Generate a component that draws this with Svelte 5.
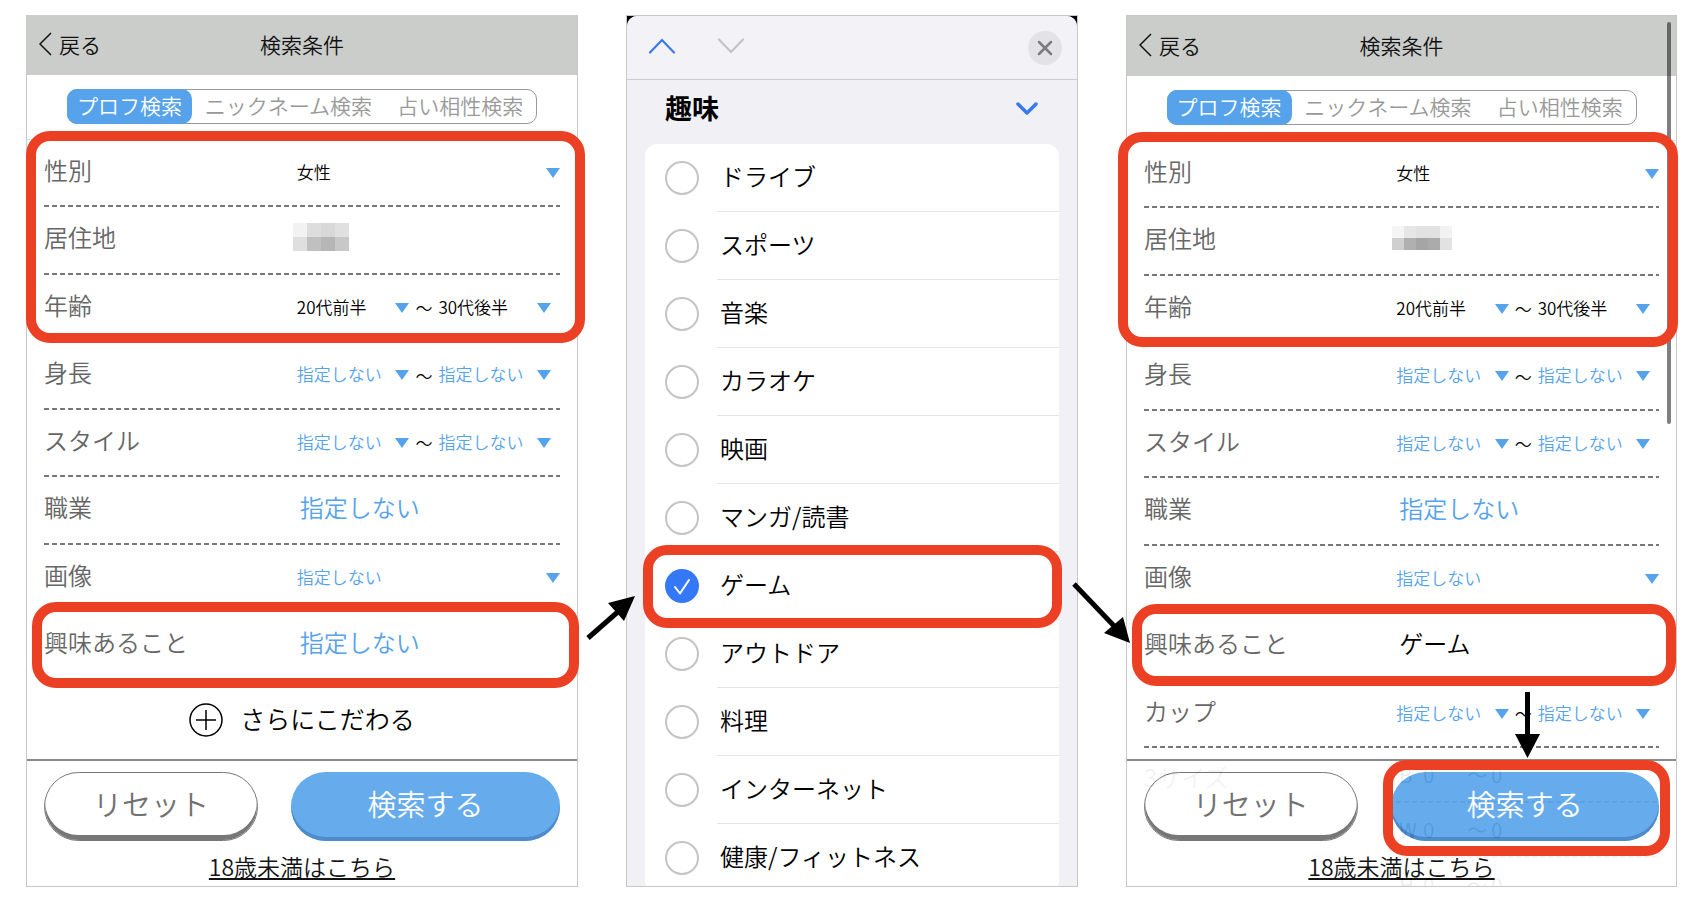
<script>
    const none = '指定しない';

    const baseRows = [
        {label: '性別', type: 'single', values: ['女性'], set: true},
        {label: '居住地', type: 'mosaic'},
        {label: '年齢', type: 'range', values: ['20代前半', '30代後半'], set: true},
        {label: '身長', type: 'range', values: [none, none]},
        {label: 'スタイル', type: 'range', values: [none, none]},
        {label: '職業', type: 'link', values: [none]},
        {label: '画像', type: 'single', values: [none]},
    ];

    const screens = [
        {
            id: 'before',
            rows: [...baseRows, {label: '興味あること', type: 'link', values: [none]}],
            mosaic: [
                ['#f2f2f2', '#dddddd', '#d8d8d8', '#e0e0e0'],
                ['#dfdfdf', '#c0c0c0', '#b6b6b6', '#c8c8c8'],
            ],
            more: true,
        },
        {
            id: 'after',
            rows: [
                ...baseRows,
                {label: '興味あること', type: 'link', values: ['ゲーム'], set: true},
                {label: 'カップ', type: 'range', values: [none, none]},
                {label: '3サイズ', type: 'sizes'},
            ],
            mosaic: [
                ['#f5f5f5', '#e6e6e6', '#e2e2e2', '#e2e2e2', '#f2f2f2'],
                ['#cfcfcf', '#b0b0b0', '#a5a5a5', '#ababab', '#e2e2e2'],
            ],
            more: false,
        },
    ];

    const hobbies = [
        'ドライブ', 'スポーツ', '音楽', 'カラオケ', '映画', 'マンガ/読書',
        'ゲーム', 'アウトドア', '料理', 'インターネット', '健康/フィットネス',
    ];
    let hobby = $state('ゲーム');
</script>

{#snippet dropdown(id, value, set)}
    <span class="dropdown">
        <select {id} aria-label={id} class:set>
            <option>{value}</option>
        </select>
        <svg width="14" height="10" viewBox="0 0 14 10"><path d="M0 0H14L7 10Z" fill="#56a3eb" /></svg>
    </span>
{/snippet}

{#snippet searchScreen(s)}
    <section class="phone search {s.id}">
        <header>
            <button class="back">
                <svg width="13" height="24" viewBox="0 0 13 24"><path d="M12 1L1 12L12 23" fill="none" stroke="#111" stroke-width="1.5" /></svg>
                戻る
            </button>
            <h1>検索条件</h1>
        </header>
        <nav>
            <div class="tabs">
                <button class="active">プロフ検索</button>
                <button>ニックネーム検索</button>
                <button>占い相性検索</button>
            </div>
        </nav>
        <div class="rows">
            {#each s.rows as row}
                <div class="row" class:tall={row.type === 'sizes'}>
                    <span class="label">{row.label}</span>
                    {#if row.type === 'single'}
                        {@render dropdown(`${s.id}-${row.label}`, row.values[0], row.set)}
                    {:else if row.type === 'range'}
                        <div class="range">
                            {@render dropdown(`${s.id}-${row.label}-from`, row.values[0], row.set)}
                            <span>〜</span>
                            {@render dropdown(`${s.id}-${row.label}-to`, row.values[1], row.set)}
                        </div>
                    {:else if row.type === 'link'}
                        <button class="pick" class:set={row.set}>{row.values[0]}</button>
                    {:else if row.type === 'mosaic'}
                        <div class="mosaic">
                            {#each s.mosaic as line}
                                <div>
                                    {#each line as color}<i style="background: {color}"></i>{/each}
                                </div>
                            {/each}
                        </div>
                    {:else}
                        <div class="sizes">
                            {#each ['B', 'W', 'H'] as part}
                                <div><span>{part}</span><span>0</span><span>〜</span><span>0</span></div>
                            {/each}
                        </div>
                    {/if}
                </div>
            {/each}
        </div>
        {#if s.more}
            <button class="more">
                <svg width="34" height="34" viewBox="0 0 34 34" fill="none" stroke="#000" stroke-width="1.5">
                    <circle cx="17" cy="17" r="16" />
                    <path d="M17 7V27M7 17H27" />
                </svg>
                <span>さらにこだわる</span>
            </button>
        {/if}
        <footer>
            <div class="actions">
                <button class="reset">リセット</button>
                <button class="submit">検索する</button>
            </div>
            <a href="#under18">18歳未満はこちら</a>
        </footer>
        {#if !s.more}
            <div class="scrollbar"></div>
        {/if}
    </section>
{/snippet}

<main>
    <div class="step">
        {@render searchScreen(screens[0])}
        <div class="mark basics"></div>
        <div class="mark interest"></div>
    </div>

    <div class="step">
        <section class="phone picker">
            <div class="sheet">
                <div class="toolbar">
                    <button aria-label="前へ">
                        <svg width="28" height="16" viewBox="0 0 28 16"><path d="M2 14.5L14 2L26 14.5" fill="none" stroke="#3a78ee" stroke-width="2.2" stroke-linecap="round" /></svg>
                    </button>
                    <button aria-label="次へ">
                        <svg width="28" height="16" viewBox="0 0 28 16"><path d="M2 1.5L14 14L26 1.5" fill="none" stroke="#c3c3c6" stroke-width="2.2" stroke-linecap="round" /></svg>
                    </button>
                    <button class="close" aria-label="閉じる">
                        <svg width="16" height="16" viewBox="0 0 16 16"><path d="M2 2L14 14M14 2L2 14" stroke="#7c7c80" stroke-width="2.5" stroke-linecap="round" /></svg>
                    </button>
                </div>
                <div class="title">
                    <h2>趣味</h2>
                    <svg width="24" height="16" viewBox="0 0 24 16"><path d="M3 3L12 12L21 3" fill="none" stroke="#3a78ee" stroke-width="3.5" stroke-linecap="round" stroke-linejoin="round" /></svg>
                </div>
                <div class="options">
                    {#each hobbies as name}
                        <label>
                            <input type="radio" name="hobby" value={name} bind:group={hobby} />
                            <svg class="tick" width="34" height="34" viewBox="0 0 34 34"><path d="M10 18L15 24.5L24 11" fill="none" stroke="#fff" stroke-width="2" stroke-linecap="round" stroke-linejoin="round" /></svg>
                            <span>{name}</span>
                        </label>
                    {/each}
                </div>
            </div>
        </section>
        <div class="mark game"></div>
        <svg class="arrow in" width="50" height="46" viewBox="0 0 50 46">
            <path d="M2 43L34 15" stroke="#000" stroke-width="5" />
            <path d="M49 1L22 8L38 26Z" />
        </svg>
        <svg class="arrow out" width="60" height="64" viewBox="0 0 60 64">
            <path d="M2 3L44 47" stroke="#000" stroke-width="5" />
            <path d="M58 62L51 36L32 52Z" />
        </svg>
    </div>

    <div class="step">
        {@render searchScreen(screens[1])}
        <div class="mark basics-after"></div>
        <div class="mark interest-after"></div>
        <div class="mark go"></div>
        <svg class="arrow down" width="26" height="66" viewBox="0 0 26 66">
            <path d="M12.500 0V45" stroke="#000" stroke-width="5" />
            <path d="M0 42H25L12.500 66Z" />
        </svg>
    </div>
</main>

<style>
    :global(body) {
        background: #fff;
        font-family: "Noto Sans CJK JP", sans-serif;
        font-weight: 350;
        overflow: hidden;
    }

    main {
        display: grid;
        grid-template-columns: 552fr 452fr 551fr;
        gap: 48px;
        padding: 15px 21px 0 26px;
    }

    .step {
        position: relative;
        min-width: 0;
    }

    .phone {
        position: relative;
        box-sizing: border-box;
        height: calc(100vh - 32px);
        border: 1px solid #c8c8c8;
        overflow: hidden;
        background: #fff;
    }

    button,
    select {
        border: 0;
        padding: 0;
        background: none;
        color: inherit;
        font: inherit;
        cursor: pointer;
    }

    svg {
        display: block;
        flex: none;
    }

    /* search form */
    .search {
        border-top: 0;
    }

    .after {
        border-top: 1px solid #c8c8c8;
    }

    header {
        display: grid;
        grid-template-columns: 1fr auto 1fr;
        align-items: center;
        box-sizing: border-box;
        height: 60px;
        padding: 0 12px 2px;
        background: #cbcdcb;
        color: #111;
        font-size: 21px;
        line-height: 56px;
    }

    h1 {
        margin: 0;
        font: inherit;
    }

    .back {
        display: flex;
        align-items: center;
        gap: 7px;
    }

    nav {
        display: flex;
        justify-content: center;
        padding: 14px 0 15px;
        border-bottom: 1px solid #ddd;
    }

    .tabs {
        display: flex;
        box-sizing: border-box;
        width: 470px;
        height: 35px;
        border: 1px solid #999;
        border-radius: 10px;
        color: #999;
        font-size: 21px;
        line-height: 31px;
    }

    .tabs button {
        flex: 1 1 auto;
        padding-bottom: 2px;
        white-space: nowrap;
    }

    .tabs .active {
        flex: none;
        width: 125px;
        margin: -1px 0 -1px -1px;
        border-radius: 10px;
        background: #56a3eb;
        color: #fff;
    }

    .rows {
        padding: 0 17px;
    }

    .row {
        display: grid;
        grid-template-columns: 49fr 51fr;
        align-items: center;
        box-sizing: border-box;
        height: 67px;
        padding-bottom: 2px;
        background: repeating-linear-gradient(90deg, #777 0 5px, transparent 5px 8px) bottom / 100% 2px no-repeat;
    }

    .row:nth-child(even) {
        height: 68px;
    }

    .before .row:last-child {
        background: none;
    }

    .label,
    .pick {
        padding-bottom: 6px;
        color: #666;
        font-size: 24px;
        line-height: 34px;
    }

    .dropdown {
        display: grid;
        align-items: center;
        color: #56a3eb;
        font-size: 17px;
    }

    .dropdown select,
    .dropdown svg {
        grid-area: 1 / 1;
    }

    .dropdown select {
        appearance: none;
        width: 100%;
        height: 34px;
        padding-bottom: 3px;
    }

    .dropdown svg {
        justify-self: end;
        pointer-events: none;
    }

    .set,
    .dropdown .set {
        color: #000;
    }

    .range {
        display: grid;
        grid-template-columns: 1fr 17px 1fr;
        gap: 6px;
        align-items: center;
        padding-right: 9px;
        font-size: 17px;
    }

    .pick {
        justify-self: start;
        padding-left: 3px;
        color: #56a3eb;
    }

    .pick.set {
        color: #000;
    }

    .mosaic {
        margin-left: -4px;
        padding-bottom: 6px;
    }

    .mosaic div {
        display: flex;
    }

    .mosaic i {
        width: 14px;
        height: 14px;
    }

    .after .mosaic i {
        width: 12px;
        height: 12px;
    }

    .row.tall {
        align-items: start;
        height: 166px;
    }

    .tall .label {
        padding-top: 12px;
    }

    .sizes div {
        display: grid;
        grid-template-columns: 24px 44px 24px 1fr;
        box-sizing: border-box;
        height: 55px;
        padding-left: 3px;
        background: repeating-linear-gradient(90deg, #777 0 5px, transparent 5px 8px) bottom / 100% 2px no-repeat;
        font-size: 20px;
        line-height: 54px;
    }

    .more {
        display: flex;
        align-items: center;
        gap: 17px;
        margin: 19px auto 0;
        font-size: 25px;
        line-height: 38px;
    }

    .more span {
        padding-bottom: 3px;
    }

    footer {
        position: absolute;
        right: 0;
        bottom: 0;
        left: 0;
        display: flex;
        flex-direction: column;
        align-items: center;
        border-top: 2px solid #808080;
        background: #fff;
        opacity: 0.92;
    }

    .actions {
        display: grid;
        grid-template-columns: 214fr 269fr;
        gap: 33px;
        align-self: stretch;
        padding: 11px 17px 8px;
        font-size: 29px;
        line-height: 60px;
    }

    .actions button {
        box-sizing: border-box;
        height: 69px;
        padding-bottom: 7px;
        border-radius: 35px;
    }

    .reset {
        border: 1px solid #6c6c6c;
        box-shadow: inset 0 -5px #6c6c6c;
        color: #666;
    }

    .submit {
        background: #5aa6ec;
        box-shadow: inset 0 -4px #3f82c6;
        color: #fff;
    }

    footer a {
        margin-bottom: 3px;
        color: #000;
        font-size: 23px;
        line-height: 34px;
    }

    .scrollbar {
        position: absolute;
        top: 6px;
        right: 5px;
        width: 4px;
        height: 402px;
        border-radius: 2px;
        background: rgba(0, 0, 0, 0.5);
    }

    /* hobby picker */
    .picker {
        background: #000;
    }

    .sheet {
        min-height: 100%;
        border-radius: 10px 10px 0 0;
        background: #f0f0f5;
    }

    .toolbar {
        display: flex;
        align-items: center;
        gap: 41px;
        height: 63px;
        padding: 0 15px 0 21px;
        border-bottom: 1px solid #ccc;
        border-radius: 10px 10px 0 0;
        background: #f3f3f7;
    }

    .toolbar button {
        padding-bottom: 4px;
    }

    .toolbar .close {
        display: flex;
        align-items: center;
        justify-content: center;
        width: 34px;
        height: 34px;
        margin-left: auto;
        padding: 0;
        border-radius: 50%;
        background: #e3e3e7;
    }

    .title {
        display: flex;
        align-items: center;
        justify-content: space-between;
        height: 58px;
        padding: 0 38px 6px;
    }

    h2 {
        margin: 0;
        padding-bottom: 2px;
        font-size: 27px;
        font-weight: 700;
        line-height: 40px;
    }

    .options {
        margin: 0 18px;
        border-radius: 12px;
        background: #fff;
    }

    label {
        display: grid;
        grid-template-columns: 34px 1fr;
        column-gap: 18px;
        align-items: center;
        height: 68px;
        padding-left: 20px;
        cursor: pointer;
    }

    label input {
        appearance: none;
        grid-area: 1 / 1;
        box-sizing: border-box;
        width: 34px;
        height: 34px;
        margin: 0;
        border: 2px solid #c4c4c6;
        border-radius: 50%;
    }

    label input:checked {
        border: 0;
        background: #3478f6;
    }

    .tick {
        grid-area: 1 / 1;
        z-index: 1;
        visibility: hidden;
    }

    input:checked + .tick {
        visibility: visible;
    }

    label span {
        grid-area: 1 / 2;
        box-sizing: border-box;
        height: 68px;
        padding-left: 3px;
        border-bottom: 1px solid #e4e4e6;
        font-size: 24px;
        line-height: 64px;
        white-space: nowrap;
    }

    /* tutorial marks */
    .mark {
        position: absolute;
        border: 10px solid #ec4025;
        border-radius: 24px;
        pointer-events: none;
    }

    .basics {
        top: 116px;
        right: -7px;
        left: 0;
        height: 192px;
    }

    .interest {
        top: 587px;
        right: -1px;
        left: 6px;
        height: 66px;
    }

    .game {
        top: 530px;
        right: 16px;
        left: 17px;
        height: 63px;
    }

    .basics-after {
        top: 117px;
        right: -1px;
        left: -8px;
        height: 195px;
    }

    .interest-after {
        top: 589px;
        right: 1px;
        left: 6px;
        height: 62px;
    }

    .go {
        top: 745px;
        right: 7px;
        left: 257px;
        height: 76px;
    }

    .arrow {
        position: absolute;
        z-index: 1;
    }

    .in {
        top: 580px;
        left: -40px;
    }

    .out {
        top: 566px;
        right: -54px;
    }

    .down {
        top: 677px;
        right: 136px;
    }
</style>
